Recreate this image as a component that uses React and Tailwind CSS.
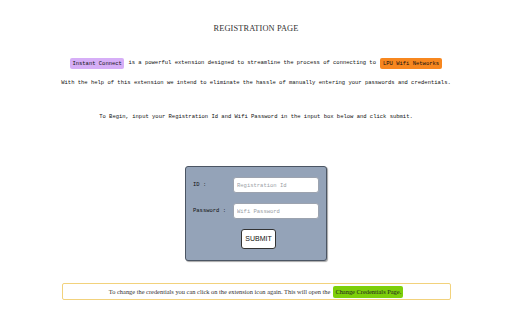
export default function App() {
  const mono = "font-['Liberation_Mono',monospace]";
  return (
    <div className="w-[512px] h-[320px] bg-white flex flex-col items-center text-[#111]">
      <h1 className="mt-[23px] font-['Liberation_Serif',serif] text-[8.4px] leading-[12px] text-[#333] tracking-[0.1px]">
        REGISTRATION PAGE
      </h1>

      <p className={`${mono} mt-[22px] text-[5.5px] leading-[12px] flex items-center`}>
        <span className="bg-[#d6aef7] rounded-[2px] px-[2.5px] py-[2px] leading-[7px] mr-[4px]">Instant Connect</span>
        is a powerful extension designed to streamline the process of connecting to
        <span className="bg-[#f7871f] rounded-[2px] px-[3px] py-[2px] leading-[7px] ml-[4px]">LPU Wifi Networks</span>
      </p>
      <p className={`${mono} mt-[8px] text-[5.5px] leading-[12px]`}>
        With the help of this extension we intend to eliminate the hassle of manually entering your passwords and credentials.
      </p>
      <p className={`${mono} mt-[22px] text-[5.5px] leading-[12px]`}>
        To Begin, input your Registration Id and Wifi Password in the input box below and click submit.
      </p>

      <form className="mt-[43px] w-[142px] h-[95px] bg-[#94a3b8] border border-[#4b5563] rounded-[3px] shadow-[1px_1px_1px_rgba(0,0,0,0.35)] pt-[10px] pl-[7px] flex flex-col">
        <div className="flex items-center">
          <label className={`${mono} w-[40px] text-[5.5px]`}>ID :</label>
          <input
            placeholder="Registration Id"
            className={`${mono} w-[86px] h-[16px] bg-white rounded-[3px] border border-[#9ca3af] px-[3px] text-[5.5px] placeholder:text-[#9aa0a6] outline-none`}
          />
        </div>
        <div className="flex items-center mt-[10px]">
          <label className={`${mono} w-[40px] text-[5.5px]`}>Password :</label>
          <input
            placeholder="Wifi Password"
            className={`${mono} w-[86px] h-[16px] bg-white rounded-[3px] border border-[#9ca3af] px-[3px] text-[5.5px] placeholder:text-[#9aa0a6] outline-none`}
          />
        </div>
        <div className="flex justify-center pr-[6px] mt-[10px]">
          <button
            type="button"
            className="ml-[4px] w-[35px] h-[20px] bg-white border border-[#333] rounded-[3px] font-['Liberation_Sans',sans-serif] text-[7px] text-[#111]"
          >
            SUBMIT
          </button>
        </div>
      </form>

      <div className="mt-[22px] w-[389px] h-[17px] border border-[#f2d27c] rounded-[2px] flex items-center justify-center font-['Liberation_Serif',serif] text-[6.4px] text-[#333]">
        To change the credentials you can click on the extension icon again. This will open the
        <span className="ml-[3px] bg-[#7dcf0a] rounded-[2px] px-[2px] py-[2px] leading-[8px] text-[#222]">Change Credentials Page.</span>
      </div>
    </div>
  );
}
